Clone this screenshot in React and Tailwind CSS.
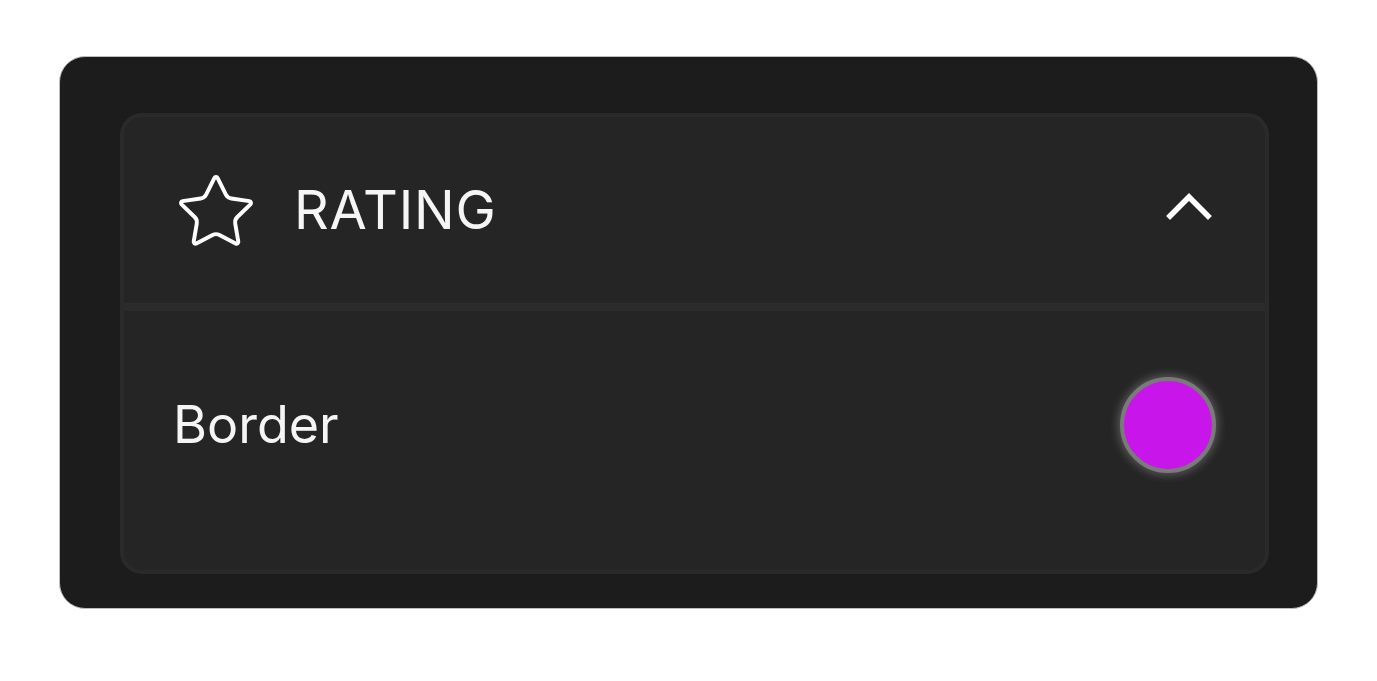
import React from "react";
import { Star } from "lucide-react";

export default function App() {
  return (
    <div className="min-h-screen w-full bg-white pt-[56px] px-[59px]" style={{ fontFamily: "Inter, 'Noto Sans', sans-serif" }}>
      <div className="w-[1259px] h-[553px] rounded-[26px] bg-[#1c1c1c] border border-[#bdbdbd] pl-[60px] pr-[48px] pt-[56px]">
        <div className="w-[1149px] h-[461px] rounded-[22px] bg-[#252525] border-[4px] border-[#2a2a2a] flex flex-col overflow-hidden">
          {/* header */}
          <div className="h-[186px] shrink-0 flex items-center justify-between pl-[50px] pr-[52px]">
            <div className="flex items-center gap-[36px]">
              <Star size={84} strokeWidth={1.12} color="#ffffff" className="mt-[3px]" />
              <span className="text-[54px] leading-none tracking-[0.015em] text-[#f5f5f5] font-normal">RATING</span>
            </div>
            <svg width="48" height="32" viewBox="0 0 48 32" className="-mt-[8px]">
              <polyline points="5,26 24,7 43,26" fill="none" stroke="#ffffff" strokeWidth="5.5" strokeLinecap="square" strokeLinejoin="miter" />
            </svg>
          </div>
          <div className="h-[8px] shrink-0 bg-[#2b2b2b]" />
          {/* body */}
          <div className="flex items-center justify-between pl-[49px] pr-[49px] pt-[66px]">
            <span className="text-[52px] leading-none text-[#f5f5f5] font-normal">Border</span>
            <div className="w-[96px] h-[96px] rounded-full bg-[#c815ea] border-[4px] border-[#7a7a7a] shadow-[0_0_10px_2px_rgba(255,255,255,0.25)]" />
          </div>
        </div>
      </div>
    </div>
  );
}
